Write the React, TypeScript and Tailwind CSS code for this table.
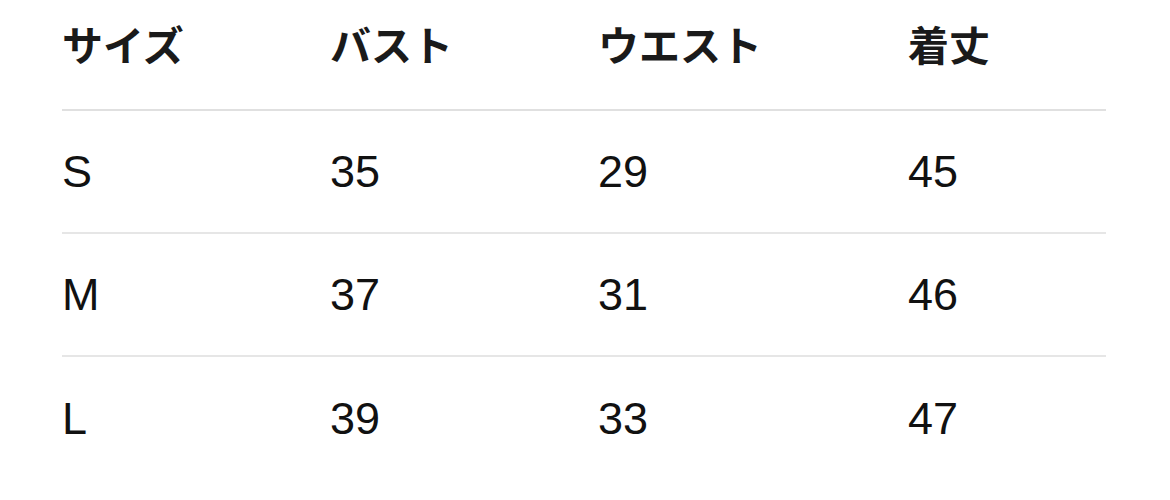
import React from 'react';

const rows = [
  { size: 'S', bust: '35', waist: '29', length: '45' },
  { size: 'M', bust: '37', waist: '31', length: '46' },
  { size: 'L', bust: '39', waist: '33', length: '47' },
];

const cols = 'grid grid-cols-[268px_268px_310px_1fr]';

export default function App() {
  return (
    <div
      className="w-[1170px] h-[500px] bg-white pl-[62px] pr-[64px] text-[#111]"
      style={{ fontFamily: '"Liberation Sans", "Noto Sans CJK JP", sans-serif' }}
    >
      {/* Header */}
      <div className={`${cols} h-[111px] items-center pb-[14px] border-b-2 border-[#e0e0e0] text-[41px] font-bold text-[#1a1a1a]`}>
        <div>サイズ</div>
        <div>バスト</div>
        <div>ウエスト</div>
        <div>着丈</div>
      </div>

      {/* Rows */}
      {rows.map((r, i) => (
        <div
          key={r.size}
          className={`${cols} h-[123px] items-center text-[45px] ${i < rows.length - 1 ? 'border-b-2 border-[#e6e6e6]' : ''}`}
        >
          <div>{r.size}</div>
          <div>{r.bust}</div>
          <div>{r.waist}</div>
          <div>{r.length}</div>
        </div>
      ))}
    </div>
  );
}
